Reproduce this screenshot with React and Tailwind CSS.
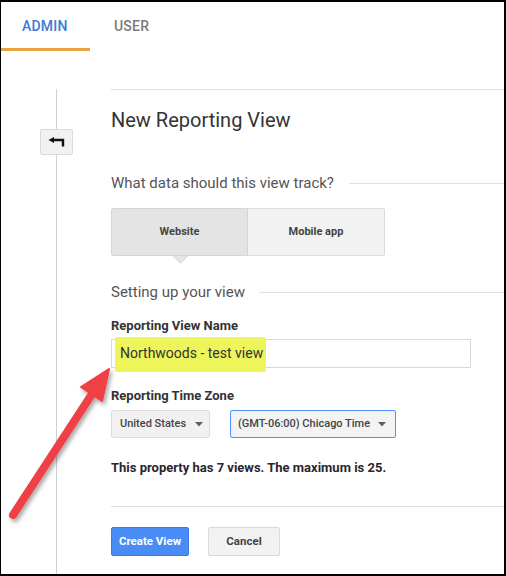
import React from "react";

function Caret() {
  return (
    <svg width="8" height="5" viewBox="0 0 8 5" className="shrink-0">
      <path d="M0 0 L8 0 L4 4.5 Z" fill="#5f5f5f" />
    </svg>
  );
}

export default function App() {
  return (
    <div className="relative w-[506px] h-[576px] bg-white border-black border-t-2 border-l border-r-2 border-b-2 flex flex-col overflow-hidden font-['Roboto',sans-serif]">
      {/* Tabs */}
      <div className="flex h-[49px] shrink-0">
        <div className="w-[89px] border-b-[3px] border-[#e6a33e] pl-[21px] pt-[16px] text-[14px] leading-[16px] font-medium text-[#3e7ad3] tracking-[0.2px]">
          ADMIN
        </div>
        <div className="pl-[24px] pt-[16px] text-[14px] leading-[16px] font-medium text-[#7a7a7a] tracking-[0.2px]">
          USER
        </div>
      </div>

      {/* Body */}
      <div className="flex flex-1 min-h-0">
        {/* Rail */}
        <div className="w-[110px] shrink-0 mt-[38px] flex flex-col items-start">
          <div className="ml-[55px] w-px h-[40px] bg-[#d0d0d0]" />
          <button className="ml-[39px] w-[33px] h-[26px] bg-[#f1f1f1] border border-[#dadada] rounded-[2px] flex items-center justify-center">
            <svg width="17" height="10" viewBox="0 0 17 10">
              <path d="M0.5 3 L6 0 L6 6 Z" fill="#111" />
              <path d="M5 3 H15 V9.5" stroke="#111" strokeWidth="2.4" fill="none" />
            </svg>
          </button>
          <div className="ml-[55px] w-px flex-1 bg-[#d0d0d0]" />
        </div>

        {/* Content */}
        <div className="flex-1 mt-[38px] border-t border-[#e0e0e0] pt-[18px] flex flex-col">
          <div className="text-[20px] leading-[24px] text-[#333]">New Reporting View</div>

          <div className="mt-[41px] flex items-center">
            <div className="text-[15px] leading-[20px] text-[#555]">What data should this view track?</div>
            <div className="flex-1 ml-[15px] h-px bg-[#e0e0e0]" />
          </div>

          <div className="mt-[15px] flex">
            <div className="relative w-[137px] h-[48px] bg-[#e4e4e4] border border-[#d6d6d6] rounded-l-[2px] flex items-center justify-center text-[11px] font-bold text-[#444]">
              Website
              <svg className="absolute left-[61px] top-[47px]" width="15" height="8" viewBox="0 0 15 8">
                <path d="M0 0 L15 0 L7.5 7.5 Z" fill="#e4e4e4" />
                <path d="M0 0 L7.5 7.5 L15 0" stroke="#dcdcdc" strokeWidth="1" fill="none" />
              </svg>
            </div>
            <div className="w-[137px] h-[48px] bg-[#f2f2f2] border border-l-0 border-[#dcdcdc] rounded-r-[2px] flex items-center justify-center text-[11px] font-bold text-[#444]">
              Mobile app
            </div>
          </div>

          <div className="mt-[26px] flex items-center">
            <div className="text-[15px] leading-[20px] text-[#555]">Setting up your view</div>
            <div className="flex-1 ml-[14px] h-px bg-[#e0e0e0]" />
          </div>

          <div className="mt-[16px] text-[13px] leading-[16px] font-bold text-[#333]">Reporting View Name</div>

          <div className="relative mt-[5px] w-[360px] h-[29px] border border-[#d9d9d9] flex items-center pl-[8px]">
            <div className="absolute left-[3px] top-[-3px] w-[151px] h-[35px] bg-[#eef55a] rounded-[2px]" />
            <span className="relative text-[14px] text-[#333]">Northwoods - test view</span>
          </div>

          <div className="mt-[20px] text-[13px] leading-[16px] font-bold text-[#333]">Reporting Time Zone</div>

          <div className="mt-[6px] flex gap-[20px]">
            <div className="w-[99px] h-[28px] bg-[#f1f1f1] border border-[#dcdcdc] rounded-[2px] flex items-center pl-[8px] gap-[9px] text-[11px] font-medium text-[#444] whitespace-nowrap">
              United States
              <Caret />
            </div>
            <div className="w-[166px] h-[28px] bg-[#f3f3f3] border border-[#4d90fe] rounded-[2px] flex items-center pl-[7px] gap-[8px] text-[11px] font-medium text-[#444] whitespace-nowrap">
              (GMT-06:00) Chicago Time
              <Caret />
            </div>
          </div>

          <div className="mt-[22px] text-[13px] leading-[16px] font-bold text-[#2b2530]">
            This property has 7 views. The maximum is 25.
          </div>

          <div className="mt-[30px] h-px bg-[#e0e0e0]" />

          <div className="mt-[20px] flex">
            <button className="w-[78px] h-[29px] bg-[#4a8cf5] border border-[#3b7de8] rounded-[2px] text-[11.5px] font-bold text-white whitespace-nowrap">
              Create View
            </button>
            <button className="ml-[19px] w-[72px] h-[29px] bg-[#f2f2f2] border border-[#dadada] rounded-[2px] text-[11.5px] font-bold text-[#444]">
              Cancel
            </button>
          </div>
        </div>
      </div>

      {/* Red arrow annotation */}
      <svg
        className="absolute left-[-1px] top-[-2px] pointer-events-none"
        width="506"
        height="576"
        viewBox="0 0 506 576"
      >
        <defs>
          <filter id="sh" x="-20%" y="-20%" width="140%" height="140%">
            <feDropShadow dx="2" dy="3" stdDeviation="2" floodColor="#000" floodOpacity="0.35" />
          </filter>
        </defs>
        <g filter="url(#sh)">
          <line x1="13" y1="515" x2="94" y2="391" stroke="#ee3f45" strokeWidth="8" strokeLinecap="round" />
          <path d="M109 369 L81 387 L102 401 Z" fill="#ee3f45" stroke="#ee3f45" strokeWidth="2" strokeLinejoin="round" />
        </g>
      </svg>
    </div>
  );
}
